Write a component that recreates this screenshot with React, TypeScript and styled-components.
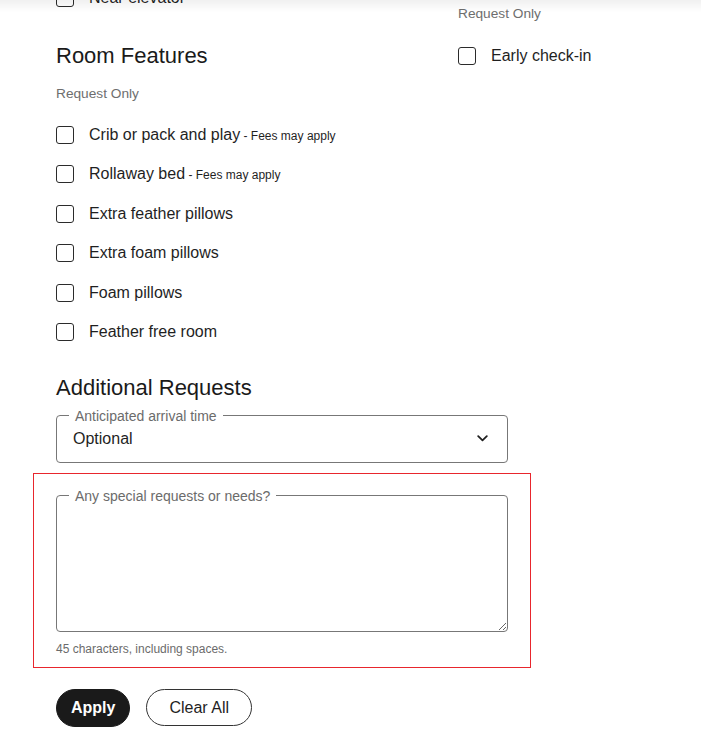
import React from "react";
import styled, { createGlobalStyle } from "styled-components";

const GlobalStyle = createGlobalStyle`
  html, body {
    margin: 0;
    padding: 0;
    background: #ffffff;
  }
  body {
    font-family: "Liberation Sans", Arial, sans-serif;
    color: #1f1f1f;
  }
`;

type Feature = { label: string; note?: string };

const roomFeatures: Feature[] = [
  { label: "Crib or pack and play", note: "Fees may apply" },
  { label: "Rollaway bed", note: "Fees may apply" },
  { label: "Extra feather pillows" },
  { label: "Extra foam pillows" },
  { label: "Foam pillows" },
  { label: "Feather free room" },
];

const CheckOption = ({ label, note }: Feature) => (
  <Row>
    <Box type="checkbox" />
    <Label>
      {label}
      {note && <Note> - {note}</Note>}
    </Label>
  </Row>
);

const App = () => {
  return (
    <>
      <GlobalStyle />
      <TopFade />
      <Page>
        <Columns>
          <Column>
            <CheckOption label="Near elevator" />
            <Heading $top={34}>Room Features</Heading>
            <Hint>Request Only</Hint>
            <List>
              {roomFeatures.map((f) => (
                <CheckOption key={f.label} {...f} />
              ))}
            </List>
          </Column>
          <Column $offset={16}>
            <Hint $first>Request Only</Hint>
            <List $top={22}>
              <CheckOption label="Early check-in" />
            </List>
          </Column>
        </Columns>

        <Heading $top={32}>Additional Requests</Heading>
        <Field $select>
          <Legend>Anticipated arrival time</Legend>
          <SelectValue>
            Optional
            <svg width="11" height="7" viewBox="0 0 11 7" fill="none">
              <path
                d="M1.2 1.2 5.5 5.3l4.3-4.1"
                stroke="#1f1f1f"
                strokeWidth="1.8"
                strokeLinecap="round"
                strokeLinejoin="round"
              />
            </svg>
          </SelectValue>
        </Field>

        <Highlight>
          <Field>
            <Legend>Any special requests or needs?</Legend>
            <TextArea />
          </Field>
          <Helper>45 characters, including spaces.</Helper>
        </Highlight>

        <Actions>
          <Button $primary>Apply</Button>
          <Button>Clear All</Button>
        </Actions>
      </Page>
    </>
  );
};

const TopFade = styled.div`
  position: fixed;
  top: 0;
  left: 0;
  right: 0;
  height: 12px;
  background: linear-gradient(
    to bottom,
    rgba(0, 0, 0, 0.06),
    rgba(0, 0, 0, 0)
  );
  pointer-events: none;
  z-index: 2;
`;

const Page = styled.div`
  margin-top: -12px;
  padding: 0 0 40px 56px;
  width: 452px;
`;

const Columns = styled.div`
  display: grid;
  grid-template-columns: 402px 240px;
`;

const Column = styled.div<{ $offset?: number }>`
  display: flex;
  flex-direction: column;
  padding-top: ${(p) => p.$offset ?? 0}px;
`;

const Heading = styled.h2<{ $top: number }>`
  margin: ${(p) => p.$top}px 0 0;
  font-size: 22px;
  line-height: 28px;
  font-weight: 400;
  color: #1a1a1a;
`;

const Hint = styled.div<{ $first?: boolean }>`
  margin-top: ${(p) => (p.$first ? 0 : 14)}px;
  font-size: 13.7px;
  line-height: 20px;
  color: #6e6e6e;
`;

const List = styled.div<{ $top?: number }>`
  display: flex;
  flex-direction: column;
  gap: 19.4px;
  margin-top: ${(p) => p.$top ?? 21}px;
`;

const Row = styled.label`
  display: flex;
  align-items: center;
  gap: 15px;
  height: 20px;
`;

const Box = styled.input`
  appearance: none;
  margin: 0;
  width: 18px;
  height: 18px;
  border: 1.5px solid #2b2b2b;
  border-radius: 3px;
  background: #fff;
  flex-shrink: 0;
`;

const Label = styled.span`
  font-size: 16px;
  line-height: 20px;
  color: #1f1f1f;
  white-space: nowrap;
`;

const Note = styled.span`
  font-size: 12px;
`;

const Field = styled.fieldset<{ $select?: boolean }>`
  margin: ${(p) => (p.$select ? 6 : 0)}px 0 0;
  padding: 0 0 0 16px;
  border: 1px solid #777777;
  border-radius: 4px;
  min-width: 0;
  box-sizing: border-box;
  width: 452px;
  ${(p) => !p.$select && "height: 144px; display: flex;"}
`;

const Legend = styled.legend`
  margin-left: -4px;
  padding: 0 6px;
  font-size: 14px;
  line-height: 16px;
  color: #6b6b6b;
  font-family: "Liberation Sans", Arial, sans-serif;
`;

const SelectValue = styled.div`
  display: flex;
  align-items: center;
  justify-content: space-between;
  padding: 5px 19px 13px 0;
  font-size: 16px;
  line-height: 20px;
  color: #1f1f1f;
`;

const TextArea = styled.textarea`
  display: block;
  width: calc(100% + 16px);
  margin-left: -16px;
  height: 127px;
  border: none;
  outline: none;
  resize: vertical;
  background: transparent;
  box-sizing: border-box;
  padding: 8px 16px;
  font: 16px "Liberation Sans", Arial, sans-serif;
`;

const Highlight = styled.div`
  margin: 10px -23px 0;
  padding: 14px 22px 10px;
  border: 1px solid #e8262d;
`;

const Helper = styled.div`
  margin-top: 9px;
  font-size: 12px;
  line-height: 16px;
  color: #6b6b6b;
`;

const Actions = styled.div`
  display: flex;
  align-items: center;
  gap: 16px;
  margin-top: 21px;
`;

const Button = styled.button<{ $primary?: boolean }>`
  height: ${(p) => (p.$primary ? 38 : 37)}px;
  padding: 0 ${(p) => (p.$primary ? 14 : 22)}px;
  border-radius: 19px;
  border: 1px solid ${(p) => (p.$primary ? "#1a1a1a" : "#333333")};
  background: ${(p) => (p.$primary ? "#1a1a1a" : "#ffffff")};
  color: ${(p) => (p.$primary ? "#ffffff" : "#1f1f1f")};
  font-family: "Liberation Sans", Arial, sans-serif;
  font-size: 16px;
  font-weight: ${(p) => (p.$primary ? 700 : 400)};
  cursor: pointer;
`;

export default App;
